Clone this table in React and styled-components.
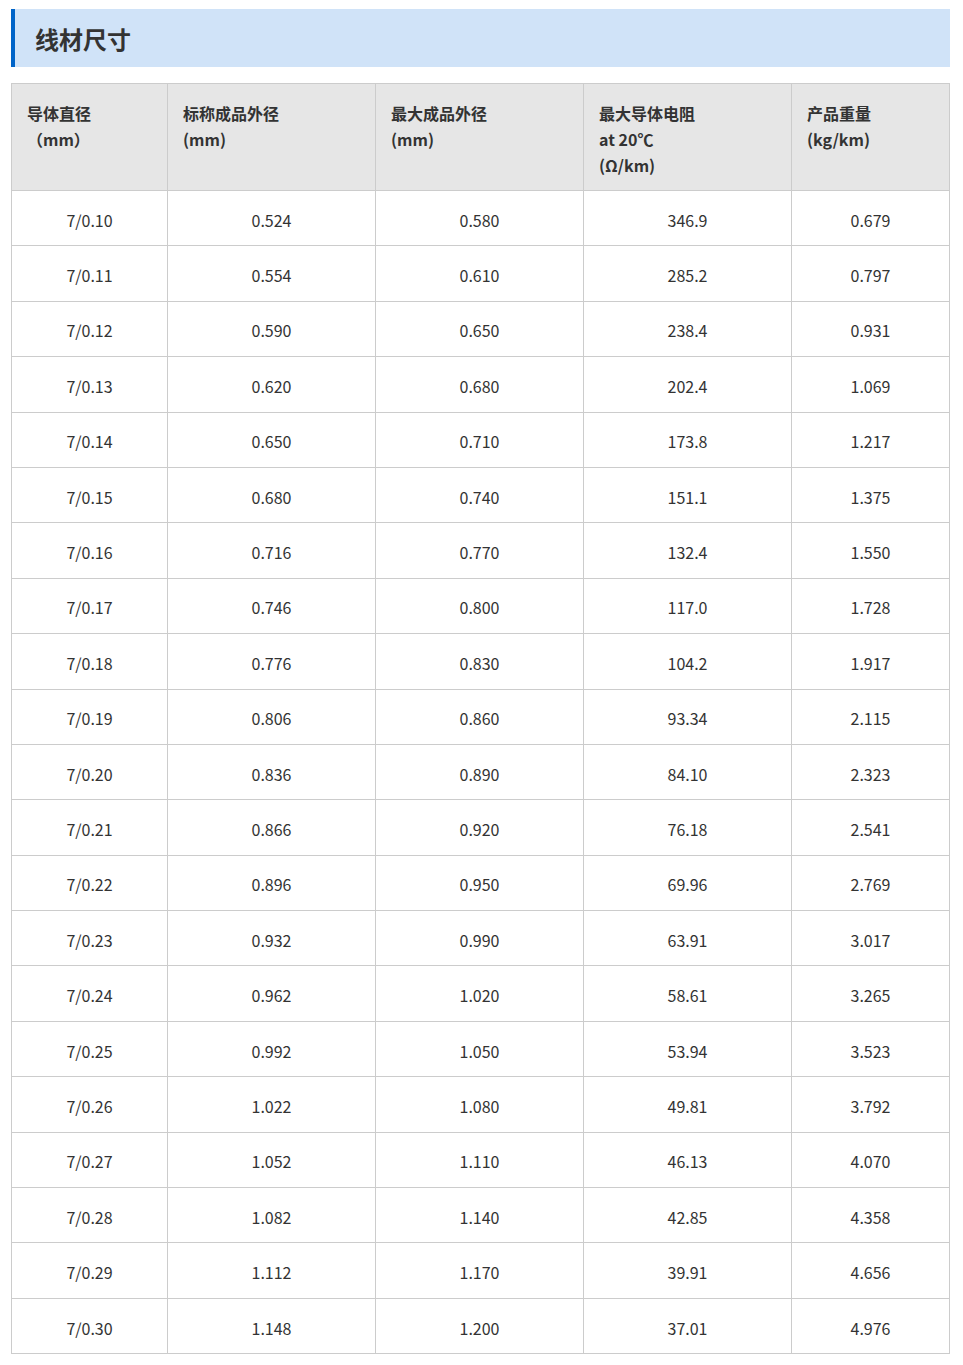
import React from 'react';
import styled, { createGlobalStyle } from 'styled-components';

const GlobalStyle = createGlobalStyle`
  body {
    margin: 0;
    background: #fff;
    font-family: "Noto Sans CJK SC", "Noto Sans", sans-serif;
    color: #333;
  }
`;

const Page = styled.div`
  padding: 9px 13px 0 11px;
`;

const TitleBar = styled.div`
  height: 58px;
  display: flex;
  align-items: center;
  background: #d0e3f8;
  border-left: 4px solid #0064c8;
  padding-left: 20px;
  box-sizing: border-box;
`;

const Title = styled.h2`
  margin: 0;
  font-size: 24px;
  font-weight: 700;
  color: #333;
`;

const Table = styled.table`
  margin-top: 16px;
  width: 939px;
  border-collapse: collapse;
  table-layout: fixed;
  border: 1px solid #cccccc;
`;

const HeadCell = styled.th`
  background: #e6e6e6;
  border: 1px solid #cccccc;
  height: 107px;
  padding: 16px 15px 0;
  box-sizing: border-box;
  vertical-align: top;
  text-align: left;
  font-size: 16px;
  line-height: 26px;
  font-weight: 700;
  color: #333;
`;

const Cell = styled.td`
  border: 1px solid #cccccc;
  height: 55.4px;
  padding: 3px 0 0;
  box-sizing: border-box;
  text-align: center;
  vertical-align: middle;
  font-size: 16px;
  line-height: 22px;
  color: #333;
`;

const columns = [
  { width: 156, lines: ['导体直径', '（mm）'] },
  { width: 208, lines: ['标称成品外径', '(mm)'] },
  { width: 208, lines: ['最大成品外径', '(mm)'] },
  { width: 208, lines: ['最大导体电阻', 'at 20℃', '(Ω/km)'] },
  { width: 158, lines: ['产品重量', '(kg/km)'] },
];

const rows = [
  ['7/0.10', '0.524', '0.580', '346.9', '0.679'],
  ['7/0.11', '0.554', '0.610', '285.2', '0.797'],
  ['7/0.12', '0.590', '0.650', '238.4', '0.931'],
  ['7/0.13', '0.620', '0.680', '202.4', '1.069'],
  ['7/0.14', '0.650', '0.710', '173.8', '1.217'],
  ['7/0.15', '0.680', '0.740', '151.1', '1.375'],
  ['7/0.16', '0.716', '0.770', '132.4', '1.550'],
  ['7/0.17', '0.746', '0.800', '117.0', '1.728'],
  ['7/0.18', '0.776', '0.830', '104.2', '1.917'],
  ['7/0.19', '0.806', '0.860', '93.34', '2.115'],
  ['7/0.20', '0.836', '0.890', '84.10', '2.323'],
  ['7/0.21', '0.866', '0.920', '76.18', '2.541'],
  ['7/0.22', '0.896', '0.950', '69.96', '2.769'],
  ['7/0.23', '0.932', '0.990', '63.91', '3.017'],
  ['7/0.24', '0.962', '1.020', '58.61', '3.265'],
  ['7/0.25', '0.992', '1.050', '53.94', '3.523'],
  ['7/0.26', '1.022', '1.080', '49.81', '3.792'],
  ['7/0.27', '1.052', '1.110', '46.13', '4.070'],
  ['7/0.28', '1.082', '1.140', '42.85', '4.358'],
  ['7/0.29', '1.112', '1.170', '39.91', '4.656'],
  ['7/0.30', '1.148', '1.200', '37.01', '4.976'],
];

export default function App() {
  return (
    <Page>
      <GlobalStyle />
      <TitleBar>
        <Title>线材尺寸</Title>
      </TitleBar>
      <Table>
        <colgroup>
          {columns.map((c, i) => (
            <col key={i} style={{ width: c.width }} />
          ))}
        </colgroup>
        <thead>
          <tr>
            {columns.map((c, i) => (
              <HeadCell key={i}>
                {c.lines.map((l, j) => (
                  <div key={j}>{l}</div>
                ))}
              </HeadCell>
            ))}
          </tr>
        </thead>
        <tbody>
          {rows.map((r, i) => (
            <tr key={i}>
              {r.map((v, j) => (
                <Cell key={j}>{v}</Cell>
              ))}
            </tr>
          ))}
        </tbody>
      </Table>
    </Page>
  );
}
